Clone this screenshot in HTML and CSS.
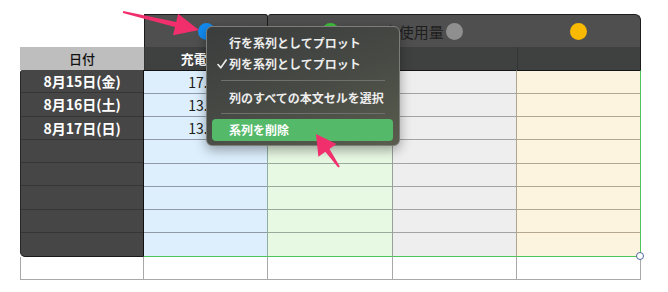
FILE: index.html
```html
<!DOCTYPE html>
<html lang="ja">
<head>
    <meta charset="UTF-8">
    <meta name="viewport" content="width=device-width, initial-scale=1.0">
    <title>系列の編集</title>
    <link rel="stylesheet" href="styles.css">
</head>
<body>
    <div class="sheet">
        <div class="tabs">
            <div class="tab tab-first">
                <div class="dotcell"><span class="dot blue"></span></div>
            </div>
            <div class="tab tab-rest">
                <div class="dotcell"><span class="dot green"></span></div>
                <div class="dotcell labeled">
                    <span class="series-name">電力使用量</span>
                    <span class="dot grey"></span>
                    <span></span>
                </div>
                <div class="dotcell"><span class="dot yellow"></span></div>
            </div>
        </div>

        <div class="head">
            <div class="hcell date-head">日付</div>
            <div class="hcell">充電電力</div>
            <div class="hcell"></div>
            <div class="hcell"></div>
            <div class="hcell"></div>
        </div>

        <div class="body">
            <div class="col col-date">
                <div class="cell">8月15日(金)</div>
                <div class="cell">8月16日(土)</div>
                <div class="cell">8月17日(日)</div>
                <div class="cell"></div>
                <div class="cell"></div>
                <div class="cell"></div>
                <div class="cell"></div>
                <div class="cell"></div>
            </div>
            <div class="col col-blue">
                <div class="cell">17.45</div>
                <div class="cell">13.20</div>
                <div class="cell">13.85</div>
                <div class="cell"></div>
                <div class="cell"></div>
                <div class="cell"></div>
                <div class="cell"></div>
                <div class="cell"></div>
            </div>
            <div class="col col-green">
                <div class="cell"></div>
                <div class="cell"></div>
                <div class="cell"></div>
                <div class="cell"></div>
                <div class="cell"></div>
                <div class="cell"></div>
                <div class="cell"></div>
                <div class="cell"></div>
            </div>
            <div class="col col-grey">
                <div class="cell"></div>
                <div class="cell"></div>
                <div class="cell"></div>
                <div class="cell"></div>
                <div class="cell"></div>
                <div class="cell"></div>
                <div class="cell"></div>
                <div class="cell"></div>
            </div>
            <div class="col col-yellow">
                <div class="cell"></div>
                <div class="cell"></div>
                <div class="cell"></div>
                <div class="cell"></div>
                <div class="cell"></div>
                <div class="cell"></div>
                <div class="cell"></div>
                <div class="cell"></div>
            </div>
        </div>

        <div class="blank">
            <div class="bcell"></div>
            <div class="bcell"></div>
            <div class="bcell"></div>
            <div class="bcell"></div>
            <div class="bcell"></div>
        </div>

        <span class="handle"></span>
    </div>

    <!-- コンテキストメニュー -->
    <div class="menu">
        <div class="item">行を系列としてプロット</div>
        <div class="item checked">
            <svg class="check" width="10" height="10" viewBox="0 0 10 10"><polyline points="1,5.5 3.8,8.8 9.2,1" /></svg>列を系列としてプロット
        </div>
        <div class="sep"></div>
        <div class="item">列のすべての本文セルを選択</div>
        <div class="sep sep2"></div>
        <div class="item active">系列を削除</div>
    </div>

    <!-- 注釈の矢印 -->
    <svg class="arrows" width="668" height="292" viewBox="0 0 668 292">
        <polygon points="123.2,11 176.2,22.1 178.1,13.8 199,30 173.1,35.2 175,26.9 122.8,13" />
        <polygon points="338.2,167.6 325.3,151.8 318.4,156.7 316,134 336.4,144.1 329.5,149 339.8,166.4" />
    </svg>
</body>
</html>
```

FILE: styles.css
```css
body {
    margin: 0;
    font-family: "Noto Sans CJK JP", sans-serif;
    background-color: #ffffff;
    color: #1c1c1c;
    position: relative;
    width: 668px;
    height: 292px;
    overflow: hidden;
}

.sheet {
    position: relative;
    width: 621px;
    margin: 14px 0 0 20px;
}

/* 系列のタブ */
.tabs {
    display: flex;
    margin-left: 124.2px;
    height: 33px;
}
.tab {
    box-sizing: border-box;
    background-color: #4f4f4f;
    border: 1px solid #1c1c1c;
    border-bottom: none;
}
.tab-first {
    width: 124.2px;
    display: grid;
    border-radius: 0 3px 0 0;
}
.tab-rest {
    flex: 1;
    display: grid;
    grid-template-columns: repeat(3, minmax(0, 1fr));
    border-left: none;
    border-radius: 3px 6px 0 0;
}
.dotcell {
    display: flex;
    align-items: center;
    justify-content: center;
    min-width: 0;
}
.dotcell.labeled {
    display: grid;
    grid-template-columns: minmax(0, 1fr) 17px minmax(0, 1fr);
    align-items: center;
}
.series-name {
    justify-self: end;
    margin-right: 2px;
    font-size: 15px;
    color: #1e1e1e;
    white-space: nowrap;
}
.dot {
    width: 17px;
    height: 17px;
    border-radius: 50%;
}
.blue { background-color: #128bf0; }
.green { background-color: #3ec13c; }
.grey { background-color: #8f8f8f; }
.yellow { background-color: #f8b900; }

/* 見出し行 */
.head {
    display: grid;
    grid-template-columns: repeat(5, 124.2px);
    height: 23px;
}
.hcell {
    box-sizing: border-box;
    background-color: #3f4140;
    border-left: 1px solid #333534;
    color: #ffffff;
    font-size: 13px;
    font-weight: bold;
    display: flex;
    align-items: center;
    justify-content: center;
}
.hcell:last-child {
    border-right: 1px solid #1c1c1c;
}
.hcell.date-head {
    background-color: #bebebe;
    border-left: none;
    color: #111111;
    font-weight: 500;
}

/* 本文 */
.body {
    display: grid;
    grid-template-columns: repeat(5, 124.2px);
    height: 187px;
}
.col {
    box-sizing: border-box;
    display: grid;
    grid-template-rows: repeat(8, 1fr);
    border-top: 1px solid #151515;
    border-bottom: 1px solid #4ec45c;
}
.cell {
    border-bottom: 1px solid #a2a2a2;
    font-size: 14px;
    display: flex;
    align-items: center;
    justify-content: center;
}
.cell:last-child {
    border-bottom: none;
}
.col-date {
    background-color: #464646;
    border-top: none;
    border-left: 1px solid #262626;
    border-right: 1px solid #111111;
    border-bottom: 1px solid #1a1a1a;
    border-radius: 3px 0 0 5px;
}
.col-date .cell {
    border-bottom-color: #353535;
    color: #ffffff;
    font-weight: bold;
}
.col-blue {
    background-color: #ddeffd;
    border-right: 1px solid #8fae9f;
}
.col-blue .cell { border-bottom-color: #8e9aa6; }
.col-green {
    background-color: #e7f8e3;
    border-right: 1px solid #9aa19a;
}
.col-green .cell { border-bottom-color: #98aa9a; }
.col-grey {
    background-color: #eeeeee;
    border-right: 1px solid #b0a58e;
}
.col-grey .cell { border-bottom-color: #a3a3a3; }
.col-yellow {
    background-color: #fcf4df;
    border-right: 1px solid #4ec45c;
}
.col-yellow .cell { border-bottom-color: #b3a88f; }

/* 空の行 */
.blank {
    display: grid;
    grid-template-columns: repeat(5, 124.2px);
    height: 23px;
}
.bcell {
    box-sizing: border-box;
    border-right: 1px solid #a8a8a8;
    border-bottom: 1px solid #a8a8a8;
}
.bcell:first-child {
    border-left: 1px solid #a8a8a8;
}

.handle {
    position: absolute;
    left: 616px;
    top: 238px;
    width: 6px;
    height: 6px;
    border: 1.5px solid #52699a;
    border-radius: 50%;
    background-color: #ffffff;
}

/* メニュー */
.menu {
    position: absolute;
    left: 206px;
    top: 26px;
    width: 194px;
    height: 120px;
    box-sizing: border-box;
    padding: 5px 5px 0 5px;
    border: 1px solid #7c7e7a;
    border-radius: 6px;
    background: linear-gradient(160deg, #3a3d3c 0%, #454843 45%, #5a5c4e 100%);
    box-shadow: 0 4px 12px rgba(0, 0, 0, 0.35);
    color: #ededed;
    font-size: 12px;
    font-weight: 600;
}
.item {
    height: 21px;
    line-height: 21px;
    padding-left: 17px;
    white-space: nowrap;
}
.item.checked {
    display: flex;
    align-items: center;
    padding-left: 5px;
}
.check {
    margin-right: 2px;
    fill: none;
    stroke: #ededed;
    stroke-width: 1.6;
    stroke-linecap: round;
    stroke-linejoin: round;
}
.sep {
    height: 1px;
    margin: 6px 9px;
    background-color: #6f716c;
}
.sep2 {
    margin: 5px 9px;
}
.item.active {
    height: 22px;
    line-height: 22px;
    margin-right: 1px;
    border-radius: 4px;
    background-color: #55b96a;
    color: #ffffff;
}

.arrows {
    position: absolute;
    left: 0;
    top: 0;
    pointer-events: none;
}
.arrows polygon {
    fill: #f02f6c;
}
```
